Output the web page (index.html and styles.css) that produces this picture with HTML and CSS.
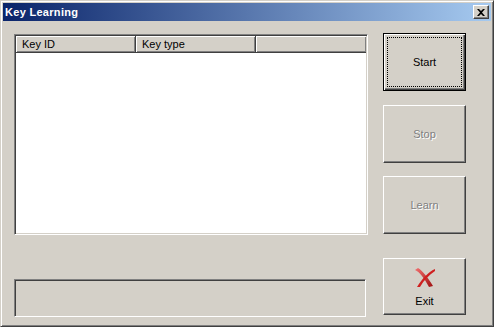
FILE: index.html
```html
<!DOCTYPE html>
<html lang="en">
<head>
    <meta charset="UTF-8">
    <title>Key Learning</title>
    <link rel="stylesheet" href="styles.css">
</head>
<body>
    <div class="window">
        <div class="titlebar">
            <span class="title">Key Learning</span>
            <span class="close">
                <svg width="8" height="7" viewBox="0 0 8 7"><path d="M0 0h2l2 2 2-2h2L5 3.5 8 7H6L4 5 2 7H0l3-3.5z" fill="#000"/></svg>
            </span>
        </div>
        <div class="content">
            <div class="left">
                <div class="list">
                    <div class="list-head">
                        <div class="col c1">Key ID</div>
                        <div class="col c2">Key type</div>
                        <div class="col c3"></div>
                    </div>
                    <div class="list-body"></div>
                </div>
                <div class="status"></div>
            </div>
            <div class="buttons">
                <div class="btn default"><span class="focus">Start</span></div>
                <div class="btn disabled">Stop</div>
                <div class="btn disabled">Learn</div>
                <div class="btn exit">
                    <svg width="24" height="24" viewBox="0 0 24 24">
                        <defs>
                            <linearGradient id="xg" x1="0" y1="0" x2="1" y2="1">
                                <stop offset="0" stop-color="#f27070"/>
                                <stop offset="1" stop-color="#a01010"/>
                            </linearGradient>
                        </defs>
                        <path d="M2 4c5 2 9 8 14 17l4-1C15 12 10 5 5 2z" fill="url(#xg)"/>
                        <path d="M22 3c-7 3-13 10-18 18h3c4-7 9-12 15-16z" fill="#cf2020"/>
                    </svg>
                    <span>Exit</span>
                </div>
            </div>
        </div>
    </div>
</body>
</html>
```

FILE: styles.css
```css
body {
    margin: 0;
    font-family: 'Liberation Sans', Arial, sans-serif;
    font-size: 11px;
    color: #000;
    background-color: #d4d0c8;
}
.window {
    width: 494px;
    height: 327px;
    box-sizing: border-box;
    background-color: #d4d0c8;
    border: 1px solid;
    border-color: #d4d0c8 #404040 #404040 #d4d0c8;
    box-shadow: inset 1px 1px #fff, inset -1px -1px #808080;
    padding: 2px;
}
.titlebar {
    height: 18px;
    display: flex;
    align-items: center;
    justify-content: space-between;
    background: linear-gradient(to right, #0a246a, #a6caf0);
    padding: 0 2px 0 2px;
}
.title {
    color: #fff;
    font-weight: bold;
    font-size: 11px;
    letter-spacing: 0.3px;
}
.close {
    width: 16px;
    height: 14px;
    box-sizing: border-box;
    background-color: #d4d0c8;
    border: 1px solid;
    border-color: #fff #404040 #404040 #fff;
    box-shadow: inset -1px -1px #808080;
    display: flex;
    align-items: center;
    justify-content: center;
}
.content {
    display: flex;
    padding: 12px 0 0 11px;
    gap: 15px;
}
.left {
    width: 354px;
    display: flex;
    flex-direction: column;
    padding-top: 1px;
}
.list {
    height: 201px;
    box-sizing: border-box;
    background-color: #fff;
    border: 1px solid;
    border-color: #808080 #fff #fff #808080;
    box-shadow: inset 1px 1px #404040, inset -1px -1px #d4d0c8;
    padding: 1px;
    display: flex;
    flex-direction: column;
}
.list-head {
    display: flex;
    height: 17px;
}
.col {
    box-sizing: border-box;
    background-color: #d4d0c8;
    border-right: 1px solid #404040;
    border-bottom: 1px solid #404040;
    box-shadow: inset 1px 1px #fff, inset -1px -1px #808080;
    padding: 2px 0 0 6px;
    line-height: 13px;
}
.c1, .c2 {
    width: 120px;
}
.c3 {
    flex: 1;
    border-right: none;
}
.list-body {
    flex: 1;
}
.status {
    margin-top: 44px;
    width: 352px;
    height: 38px;
    box-sizing: border-box;
    border: 1px solid;
    border-color: #808080 #fff #fff #808080;
    box-shadow: inset 1px 1px #404040, inset -1px -1px #d4d0c8;
}
.buttons {
    display: flex;
    flex-direction: column;
    width: 83px;
}
.btn {
    height: 58px;
    box-sizing: border-box;
    border: 1px solid;
    border-color: #fff #404040 #404040 #fff;
    box-shadow: inset -1px -1px #808080, inset 1px 1px #d4d0c8;
    display: flex;
    align-items: center;
    justify-content: center;
}
.btn.default {
    border: 1px solid #000;
    box-shadow: inset 1px 1px #fff, inset -1px -1px #404040, inset -2px -2px #808080;
    padding: 3px;
}
.focus {
    flex: 1;
    align-self: stretch;
    display: flex;
    align-items: center;
    justify-content: center;
    border: 1px dotted #000;
    padding-bottom: 1px;
}
.btn.disabled {
    color: #808080;
    text-shadow: 1px 1px #fff;
    padding-bottom: 1px;
}
.btn + .btn {
    margin-top: 14px;
}
.btn.disabled + .btn.disabled {
    margin-top: 13px;
}
.btn.exit {
    margin-top: 24px;
    height: 57px;
    flex-direction: column;
    justify-content: flex-start;
    gap: 5px;
    padding-top: 7px;
    line-height: 13px;
}
```
